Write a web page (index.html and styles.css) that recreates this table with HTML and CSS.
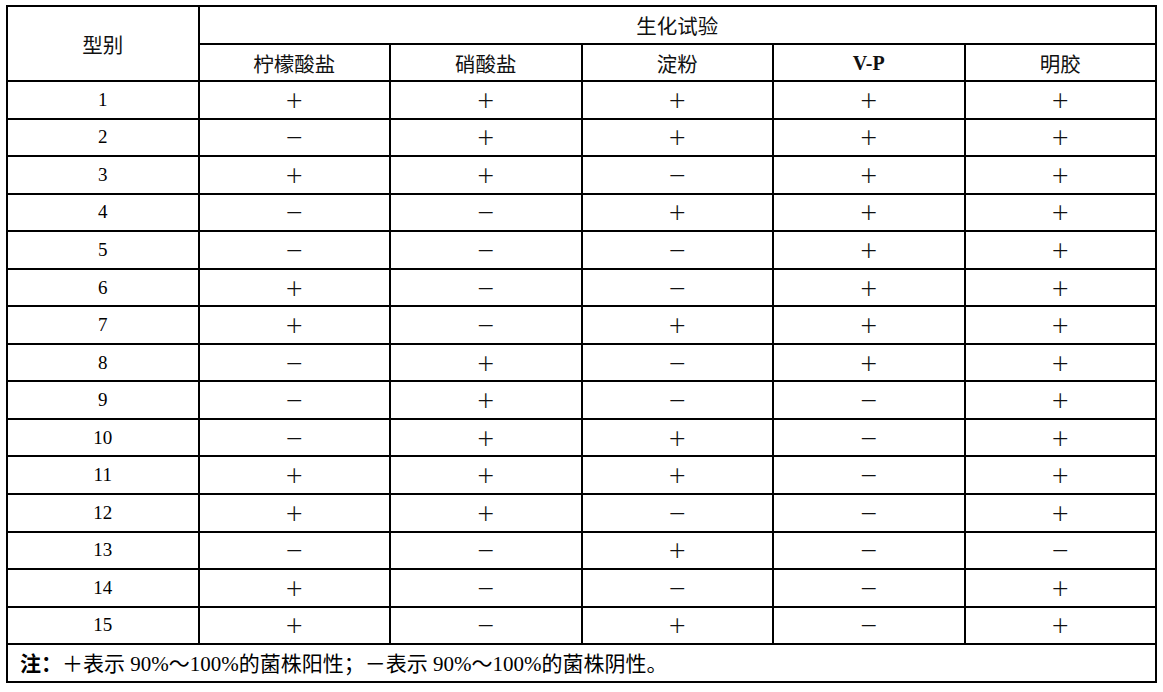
FILE: index.html
```html
<!DOCTYPE html>
<html lang="zh">
<head>
<meta charset="utf-8">
<link rel="stylesheet" href="styles.css">
</head>
<body>
<table class="grid">
  <colgroup>
    <col class="c"><col class="c"><col class="c"><col class="c"><col class="c"><col class="c">
  </colgroup>
  <thead>
    <tr class="h1">
      <th rowspan="2" class="type">型别</th>
      <th colspan="5">生化试验</th>
    </tr>
    <tr class="h2">
      <th>柠檬酸盐</th>
      <th>硝酸盐</th>
      <th>淀粉</th>
      <th class="latin">V-P</th>
      <th>明胶</th>
    </tr>
  </thead>
  <tbody>
    <tr><td class="n">1</td><td class="s">＋</td><td class="s">＋</td><td class="s">＋</td><td class="s">＋</td><td class="s">＋</td></tr>
    <tr><td class="n">2</td><td class="s">－</td><td class="s">＋</td><td class="s">＋</td><td class="s">＋</td><td class="s">＋</td></tr>
    <tr><td class="n">3</td><td class="s">＋</td><td class="s">＋</td><td class="s">－</td><td class="s">＋</td><td class="s">＋</td></tr>
    <tr><td class="n">4</td><td class="s">－</td><td class="s">－</td><td class="s">＋</td><td class="s">＋</td><td class="s">＋</td></tr>
    <tr><td class="n">5</td><td class="s">－</td><td class="s">－</td><td class="s">－</td><td class="s">＋</td><td class="s">＋</td></tr>
    <tr><td class="n">6</td><td class="s">＋</td><td class="s">－</td><td class="s">－</td><td class="s">＋</td><td class="s">＋</td></tr>
    <tr><td class="n">7</td><td class="s">＋</td><td class="s">－</td><td class="s">＋</td><td class="s">＋</td><td class="s">＋</td></tr>
    <tr><td class="n">8</td><td class="s">－</td><td class="s">＋</td><td class="s">－</td><td class="s">＋</td><td class="s">＋</td></tr>
    <tr><td class="n">9</td><td class="s">－</td><td class="s">＋</td><td class="s">－</td><td class="s">－</td><td class="s">＋</td></tr>
    <tr><td class="n">10</td><td class="s">－</td><td class="s">＋</td><td class="s">＋</td><td class="s">－</td><td class="s">＋</td></tr>
    <tr><td class="n">11</td><td class="s">＋</td><td class="s">＋</td><td class="s">＋</td><td class="s">－</td><td class="s">＋</td></tr>
    <tr><td class="n">12</td><td class="s">＋</td><td class="s">＋</td><td class="s">－</td><td class="s">－</td><td class="s">＋</td></tr>
    <tr><td class="n">13</td><td class="s">－</td><td class="s">－</td><td class="s">＋</td><td class="s">－</td><td class="s">－</td></tr>
    <tr><td class="n">14</td><td class="s">＋</td><td class="s">－</td><td class="s">－</td><td class="s">－</td><td class="s">＋</td></tr>
    <tr><td class="n">15</td><td class="s">＋</td><td class="s">－</td><td class="s">＋</td><td class="s">－</td><td class="s">＋</td></tr>
  </tbody>
  <tfoot>
    <tr class="foot">
      <td colspan="6"><b class="note">注：</b>＋表示 90%～100%的菌株阳性；－表示 90%～100%的菌株阴性。</td>
    </tr>
  </tfoot>
</table>
</body>
</html>
```

FILE: styles.css
```css
html, body {
  margin: 0;
  padding: 0;
  background: #ffffff;
}
body {
  padding: 5px 0 0 6px;
  font-family: "Liberation Serif", "Noto Sans CJK SC", serif;
  color: #000000;
}
.grid {
  border-collapse: collapse;
  table-layout: fixed;
  width: 1151px;
  border: 2px solid #000;
}
.grid th,
.grid td {
  border: 2px solid #000;
  padding: 0;
  text-align: center;
  vertical-align: middle;
  font-weight: normal;
  font-size: 19px;
  line-height: 20px;
}
.grid th {
  font-family: "Noto Sans CJK SC", "Liberation Serif", sans-serif;
  font-size: 20.5px;
  color: #111;
}
.grid th.latin {
  font-family: "Liberation Serif", serif;
  font-weight: bold;
  font-size: 20px;
}
.grid th.type {
  vertical-align: top;
  padding-top: 27px;
}
.h1 { height: 38px; }
.h2 { height: 37px; }
.grid tbody tr { height: 37.55px; }
.n {
  font-family: "Liberation Serif", serif;
}
.s {
  font-family: "Noto Sans CJK SC", sans-serif;
  font-size: 19px;
  font-weight: 300;
  color: #111;
}
.foot { height: 38px; }
.foot td {
  text-align: left;
  padding-left: 12px;
  font-family: "Liberation Serif", "Noto Sans CJK SC", serif;
  font-size: 21px;
}
.note {
  font-family: "Noto Sans CJK SC", sans-serif;
  font-weight: bold;
}
```
